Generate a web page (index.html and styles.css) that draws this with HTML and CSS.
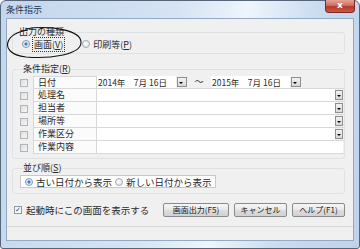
FILE: index.html
```html
<!DOCTYPE html>
<html>
<head>
    <meta charset="UTF-8">
    <title>条件指示</title>
    <link rel="stylesheet" href="styles.css">
</head>
<body>
<div class="window">
    <div class="titlebar">
        <span class="title">条件指示</span>
        <span class="close">x</span>
    </div>
    <div class="client">
        <fieldset class="group group-output">
            <legend>出力の種類</legend>
            <div class="radios">
                <span class="radio"><span class="dot on"></span><span class="focus">画面(<u>V</u>)</span></span>
                <span class="radio"><span class="dot"></span>印刷等(<u>P</u>)</span>
            </div>
        </fieldset>

        <fieldset class="group group-cond">
            <legend>条件指定(<u>R</u>)</legend>
            <div class="grid">
                <div class="row">
                    <span class="cell-check"><span class="check"></span></span>
                    <span class="cell-label">日付</span>
                    <span class="cell-value date-value">
                        <span class="datebox">2014年　7月 16日</span><span class="dd"></span>
                        <span class="tilde">〜</span>
                        <span class="datebox">2015年　7月 16日</span><span class="dd"></span>
                    </span>
                </div>
                <div class="row">
                    <span class="cell-check"><span class="check"></span></span>
                    <span class="cell-label">処理名</span>
                    <span class="cell-value"><span class="combo"></span><span class="dd"></span></span>
                </div>
                <div class="row">
                    <span class="cell-check"><span class="check"></span></span>
                    <span class="cell-label">担当者</span>
                    <span class="cell-value"><span class="combo"></span><span class="dd"></span></span>
                </div>
                <div class="row">
                    <span class="cell-check"><span class="check"></span></span>
                    <span class="cell-label">場所等</span>
                    <span class="cell-value"><span class="combo"></span><span class="dd"></span></span>
                </div>
                <div class="row">
                    <span class="cell-check"><span class="check"></span></span>
                    <span class="cell-label">作業区分</span>
                    <span class="cell-value"><span class="combo"></span><span class="dd"></span></span>
                </div>
                <div class="row">
                    <span class="cell-check"><span class="check"></span></span>
                    <span class="cell-label">作業内容</span>
                    <span class="cell-value"><span class="combo full"></span></span>
                </div>
            </div>
        </fieldset>

        <fieldset class="group group-order">
            <legend>並び順(<u>S</u>)</legend>
            <div class="order-box">
                <span class="radio"><span class="dot on"></span>古い日付から表示</span>
                <span class="radio"><span class="dot"></span>新しい日付から表示</span>
            </div>
        </fieldset>

        <div class="footer">
            <span class="startup"><span class="check checked">&#10003;</span>起動時にこの画面を表示する</span>
            <span class="buttons">
                <button class="btn btn-output">画面出力(F5)</button>
                <button class="btn btn-cancel">キャンセル</button>
                <button class="btn btn-help">ヘルプ(F1)</button>
            </span>
        </div>
        <div class="statusline"></div>
    </div>

    <svg class="annotation" width="82" height="34" viewBox="0 0 82 34">
        <path d="M21 3 C 46 -1, 78 4, 77 17 C 76 29, 45 33, 22 31 C 6 29, 2 22, 4 16 C 6 10, 12 6, 24 4" fill="none" stroke="#111" stroke-width="1.1"/>
    </svg>
</div>
</body>
</html>
```

FILE: styles.css
```css
* {
  box-sizing: border-box;
}

body {
  margin: 0;
  background: #ffffff;
  font-family: "Noto Sans CJK JP", "DejaVu Sans", sans-serif;
  font-size: 9px;
  color: #2a2a2a;
}

.window {
  position: relative;
  width: 360px;
  height: 249px;
  padding: 17px 5px 8px 5px;
  border: 1px solid #56657a;
  border-radius: 6px 6px 3px 3px;
  background: linear-gradient(100deg, #c3d6ec 0%, #d6e4f4 45%, #eef5fc 62%, #c9dbef 80%, #bfd3ea 100%);
}

.titlebar {
  position: absolute;
  top: 0;
  left: 0;
  right: 0;
  height: 17px;
}

.title {
  position: absolute;
  left: 5px;
  top: 2px;
  font-size: 9px;
  color: #1f3552;
}

.close {
  position: absolute;
  right: 4px;
  top: -1px;
  width: 30px;
  height: 13px;
  border: 1px solid #7a2a22;
  border-top: none;
  border-radius: 0 0 4px 4px;
  background: linear-gradient(#e4a497 0%, #d0705f 45%, #b8392a 55%, #c65a48 100%);
  color: #ffffff;
  font-family: "DejaVu Sans", sans-serif;
  font-size: 9px;
  font-weight: bold;
  line-height: 11px;
  text-align: center;
}

.client {
  height: 223px;
  background: #f0f0f0;
  border: 1px solid #94a9c3;
  padding: 0 8px 0 5px;
  display: flex;
  flex-direction: column;
}

.group {
  margin: 0;
  padding: 0;
  border: 1px solid #dfe2e5;
  border-radius: 3px;
  min-width: 0;
}

.group legend {
  padding: 0;
  margin-left: 3px;
  line-height: 12px;
  height: 12px;
}

.group-output {
  margin-top: 7px;
  height: 28px;
}

.group-output legend {
  margin-left: 6px;
}

.radios {
  display: flex;
  align-items: center;
  height: 12px;
  padding-left: 9px;
  gap: 18px;
}

.radio {
  display: flex;
  align-items: center;
  white-space: nowrap;
}

.dot {
  width: 8px;
  height: 8px;
  border-radius: 50%;
  border: 1px solid #a3abb4;
  background: radial-gradient(circle at 40% 40%, #ffffff 0%, #e4e7ea 70%, #cfd4d9 100%);
  margin-right: 3px;
  flex: none;
}

.dot.on {
  border-color: #7b98ba;
  background: radial-gradient(circle, #2b6fc7 0%, #4a8ad6 30%, #dfe8f2 45%, #f4f6f8 100%);
}

.focus {
  outline: 1px dotted #333333;
  outline-offset: 0;
  padding: 0 1px;
}

.group-cond {
  margin-top: 9px;
  padding: 1px 0 4px 7px;
}

.grid {
  width: 324px;
  display: flex;
  flex-direction: column;
}

.row {
  display: flex;
  height: 13px;
}

.cell-check {
  width: 13px;
  display: flex;
  align-items: center;
}

.check {
  width: 8px;
  height: 8px;
  border: 1px solid #b0b4b8;
  background: linear-gradient(135deg, #dcdfe2, #f4f5f6);
  flex: none;
}

.check.checked {
  display: inline-flex;
  align-items: center;
  justify-content: center;
  border-color: #8e99a6;
  background: #f6f8fa;
  color: #2a4f86;
  font-family: "DejaVu Sans", sans-serif;
  font-size: 7px;
  font-weight: bold;
  line-height: 8px;
  margin-right: 4px;
}

.cell-label {
  width: 64px;
  background: #fbfbfb;
  border: 1px solid #d8d8d8;
  border-top: none;
  padding-left: 4px;
  line-height: 12px;
}

.row:first-child .cell-label {
  border-top: 1px solid #d8d8d8;
}

.cell-value {
  flex: 1;
  display: flex;
  align-items: stretch;
  border-bottom: 1px solid #d8d8d8;
  background: #f0f0f0;
}

.combo {
  width: 238px;
  background: #ffffff;
}

.combo.full {
  width: 246px;
}

.dd {
  width: 8px;
  margin: 1px 0;
  border: 1px solid #8e8f8f;
  background: linear-gradient(#f2f2f2, #d8d8d8);
  position: relative;
}

.dd::after {
  content: "";
  position: absolute;
  left: 1px;
  top: 4px;
  border-left: 2px solid transparent;
  border-right: 2px solid transparent;
  border-top: 2px solid #000000;
}

.date-value .dd {
  width: 10px;
  margin-left: 1px;
}

.datebox {
  width: 79px;
  background: #ffffff;
  line-height: 12px;
  padding-left: 1px;
  font-size: 8.5px;
  white-space: nowrap;
}

.tilde {
  width: 24px;
  text-align: center;
  line-height: 12px;
  color: #333333;
}

.group-order {
  margin-top: 3px;
  padding: 1px 0 5px 7px;
}

.order-box {
  width: 196px;
  height: 13px;
  background: #ffffff;
  border: 1px solid #c8c8c8;
  display: flex;
  align-items: center;
  padding-left: 4px;
  gap: 3px;
  font-size: 9.5px;
}

.footer {
  display: flex;
  align-items: center;
  margin-top: 9px;
  height: 14px;
}

.startup {
  display: flex;
  align-items: center;
  padding-left: 2px;
  font-size: 9.5px;
  flex: 1;
}

.buttons {
  display: flex;
  gap: 5px;
}

.btn {
  height: 14px;
  padding: 0;
  border: 1px solid #8a8a8a;
  border-radius: 2px;
  background: linear-gradient(#f6f6f6 0%, #e9e9e9 48%, #dcdcdc 52%, #d2d2d2 100%);
  font-family: "Noto Sans CJK JP", "DejaVu Sans", sans-serif;
  font-size: 8px;
  line-height: 12px;
  color: #1a1a1a;
}

.btn-output {
  width: 66px;
}

.btn-cancel {
  width: 53px;
}

.btn-help {
  width: 53px;
}

.statusline {
  margin-top: 9px;
  margin-left: -5px;
  margin-right: -8px;
  border-top: 1px solid #d9d9d9;
}

.annotation {
  position: absolute;
  left: 3px;
  top: 25px;
}
```
